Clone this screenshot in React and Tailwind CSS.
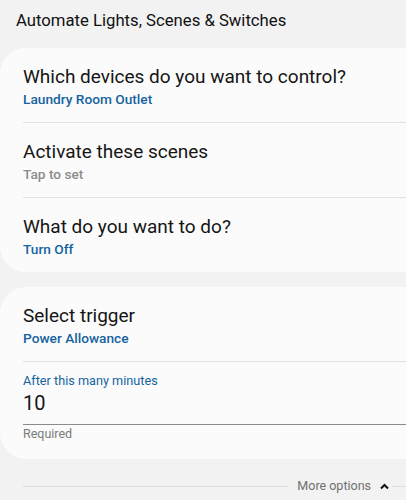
import React from 'react'

const font = { fontFamily: 'Roboto, "Noto Sans", sans-serif' }

function Row({ title, sub, muted, last }) {
  return (
    <div>
      <div className="pt-[17px] pb-[13px]">
        <p className="text-[19px] leading-6 text-[#151515]">{title}</p>
        <p
          className={`text-[13.7px] leading-5 font-medium ${
            muted ? 'text-[#8c8c8c]' : 'text-[#15639f]'
          }`}
        >
          {sub}
        </p>
      </div>
      {!last && <div className="h-px bg-[#e3e3e3]"></div>}
    </div>
  )
}

export default function App() {
  return (
    <div className="w-[406px] h-[500px] overflow-hidden bg-[#f2f2f2]" style={font}>
      {/* Header */}
      <h1 className="pt-[9px] pl-4 text-[16.7px] leading-6 text-[#111]">
        Automate Lights, Scenes &amp; Switches
      </h1>

      {/* Actions card */}
      <div className="mt-[15px] -mr-8 rounded-[26px] bg-[#fbfbfb] pl-[23px]">
        <Row title="Which devices do you want to control?" sub="Laundry Room Outlet" />
        <Row title="Activate these scenes" sub="Tap to set" muted />
        <Row title="What do you want to do?" sub="Turn Off" last />
      </div>

      {/* Trigger card */}
      <div className="mt-[15px] -mr-8 rounded-[26px] bg-[#fbfbfb] pl-[23px] pb-[17px]">
        <Row title="Select trigger" sub="Power Allowance" />
        <div className="pt-[11px] pr-8">
          <p className="text-[12.7px] leading-4 text-[#15639f]">After this many minutes</p>
          <p className="text-[20px] leading-7 text-[#151515]">10</p>
          <div className="mt-[7px] h-px bg-[#8a8a8a]"></div>
          <p className="mt-px text-[12.5px] leading-4 text-[#7a7a7a]">Required</p>
        </div>
      </div>

      {/* More options */}
      <div className="mt-[18px] flex items-center pl-[23px]">
        <div className="flex-1 h-px bg-[#dcdcdc]"></div>
        <span className="ml-[9px] text-[12.5px] leading-[18px] text-[#707070]">More options</span>
        <svg className="ml-[9px]" width="9" height="7" viewBox="0 0 9 7">
          <path d="M1 5.5 L4.5 2 L8 5.5" fill="none" stroke="#111" strokeWidth="2" />
        </svg>
        <div className="ml-[3px] w-[14px] h-px bg-[#dcdcdc]"></div>
      </div>
    </div>
  )
}
